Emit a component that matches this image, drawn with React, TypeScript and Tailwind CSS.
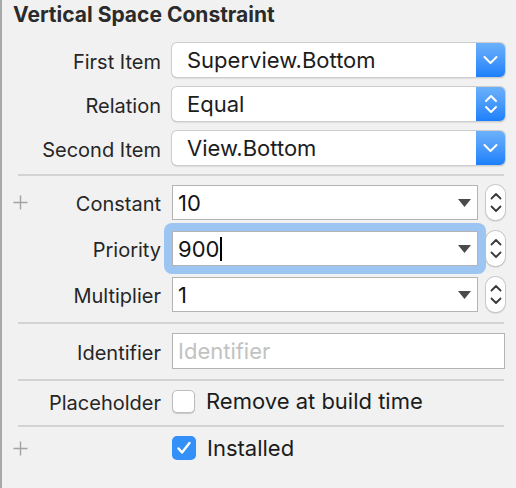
import React from "react";

const font = { fontFamily: "Inter, 'Noto Sans', sans-serif" };

function ChevronDown() {
  return (
    <svg width="15" height="10" viewBox="0 0 15 10">
      <path d="M1.5 2 L7.5 8 L13.5 2" fill="none" stroke="white" strokeWidth="2" strokeLinecap="round" strokeLinejoin="round" />
    </svg>
  );
}

function ChevronUpDown() {
  return (
    <svg width="14" height="22" viewBox="0 0 14 22">
      <path d="M2 8 L7 3 L12 8" fill="none" stroke="white" strokeWidth="2" strokeLinecap="round" strokeLinejoin="round" />
      <path d="M2 14 L7 19 L12 14" fill="none" stroke="white" strokeWidth="2" strokeLinecap="round" strokeLinejoin="round" />
    </svg>
  );
}

function Popup({ text, updown }: { text: string; updown?: boolean }) {
  return (
    <div className="flex h-[34px] w-[333px] rounded-[5px] bg-white shadow-[0_0_0_1px_#cdcdcd,0_1px_1.5px_#9a9a9a]">
      <div className="flex flex-1 items-center pl-[15px] pt-[1px] text-[22px] text-[#1c1c1c]">{text}</div>
      <div className="flex w-[29px] items-center justify-center rounded-r-[5px] bg-gradient-to-b from-[#6bb1fa] to-[#1b80fb]">
        {updown ? <ChevronUpDown /> : <ChevronDown />}
      </div>
    </div>
  );
}

function Stepper() {
  return (
    <div className="flex h-[35px] w-[19px] flex-col items-center justify-center gap-[5px] rounded-[9px] bg-white shadow-[0_0_0_1px_#c9c9c9,0_1px_1.5px_#a0a0a0]">
      <svg width="12" height="8" viewBox="0 0 12 8">
        <path d="M1.5 6.5 L6 2 L10.5 6.5" fill="none" stroke="#3a3a3a" strokeWidth="1.8" strokeLinecap="round" strokeLinejoin="round" />
      </svg>
      <svg width="12" height="8" viewBox="0 0 12 8">
        <path d="M1.5 1.5 L6 6 L10.5 1.5" fill="none" stroke="#3a3a3a" strokeWidth="1.8" strokeLinecap="round" strokeLinejoin="round" />
      </svg>
    </div>
  );
}

function Combo({ value, focused }: { value: string; focused?: boolean }) {
  return (
    <div className="flex items-center gap-[8px]">
      <div className="relative">
        {focused && <div className="absolute -inset-[8px] rounded-[8px] bg-[#9cc5f2]" />}
        <div className="relative flex h-[35px] w-[306px] items-center border border-[#b4b4b4] bg-white pl-[5px] pr-[6px]">
          <div className="flex flex-1 items-center pt-[1px] text-[22px] text-[#141414]">
            {value}
            {focused && <span className="ml-[1px] inline-block h-[24px] w-[2px] bg-black" />}
          </div>
          <svg width="13" height="8" viewBox="0 0 13 8">
            <path d="M0 0 H13 L6.5 8 Z" fill="#4a4a4a" />
          </svg>
        </div>
      </div>
      <Stepper />
    </div>
  );
}

function Plus() {
  return (
    <svg width="15" height="15" viewBox="0 0 15 15">
      <path d="M7.5 0.5 V14.5 M0.5 7.5 H14.5" stroke="#a3a3a3" strokeWidth="1.4" />
    </svg>
  );
}

function Row({ label, children, plus, className }: { label: string; children: React.ReactNode; plus?: boolean; className?: string }) {
  return (
    <div className={"flex items-center " + (className ?? "")}>
      <div className="flex w-[159px] items-center">
        <div className="flex w-[26px] justify-end">{plus && <Plus />}</div>
        <div className="flex-1 pt-[3px] text-right text-[20px] text-[#262626]">{label}</div>
      </div>
      <div className="ml-[11px]">{children}</div>
    </div>
  );
}

function Sep() {
  return <div className="ml-[16px] h-[2px] w-[486px] bg-[#d3d3d3]" />;
}

export default function App() {
  return (
    <div style={font} className="h-[488px] w-[516px] overflow-hidden border-l-2 border-[#a8a8a8] bg-[#f1f1f1]">
      <div className="h-[43px] pl-[11px] pt-[3px] text-[21px] font-bold leading-[24px] text-[#2b2b2b]">
        Vertical Space Constraint
      </div>
      <Row label="First Item">
        <Popup text="Superview.Bottom" />
      </Row>
      <Row label="Relation" className="mt-[10px]">
        <Popup text="Equal" updown />
      </Row>
      <Row label="Second Item" className="mt-[10px]">
        <Popup text="View.Bottom" />
      </Row>
      <div className="mt-[9px]">
        <Sep />
      </div>
      <Row label="Constant" plus className="mt-[9px]">
        <Combo value="10" />
      </Row>
      <Row label="Priority" className="mt-[11px]">
        <Combo value="900" focused />
      </Row>
      <Row label="Multiplier" className="mt-[11px]">
        <Combo value="1" />
      </Row>
      <div className="mt-[10px]">
        <Sep />
      </div>
      <Row label="Identifier" className="mt-[9px]">
        <div className="flex h-[36px] w-[333px] items-center border border-[#b4b4b4] bg-white pl-[5px] text-[22px] text-[#c2c2c2]">
          Identifier
        </div>
      </Row>
      <div className="mt-[10px]">
        <Sep />
      </div>
      <Row label="Placeholder" className="h-[44px] pb-[3px]">
        <div className="flex items-center gap-[11px]">
          <div className="h-[23px] w-[23px] rounded-[5px] border border-[#bdbdbd] bg-white shadow-[0_1px_1px_#c8c8c8]" />
          <span className="text-[22px] text-[#1c1c1c]">Remove at build time</span>
        </div>
      </Row>
      <Sep />
      <Row label="" plus className="h-[42px]">
        <div className="flex items-center gap-[11px]">
          <div className="flex h-[24px] w-[24px] items-center justify-center rounded-[5px] bg-[#3390f9]">
            <svg width="16" height="14" viewBox="0 0 16 14">
              <path d="M2.5 7.5 L6 11.5 L13.5 2" fill="none" stroke="white" strokeWidth="2.4" strokeLinecap="round" strokeLinejoin="round" />
            </svg>
          </div>
          <span className="text-[22px] text-[#1c1c1c]">Installed</span>
        </div>
      </Row>
    </div>
  );
}
